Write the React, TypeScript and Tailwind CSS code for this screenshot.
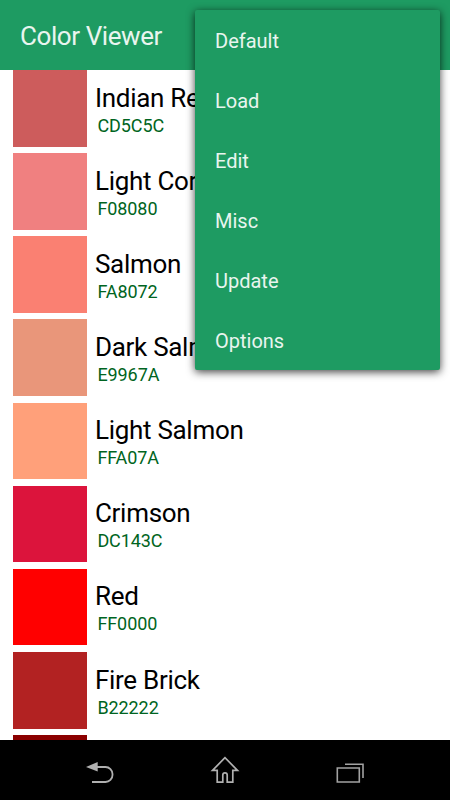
type Swatch = {
  name: string;
  hex: string;
};

const COLORS: Swatch[] = [
  { name: 'Indian Red', hex: 'CD5C5C' },
  { name: 'Light Coral', hex: 'F08080' },
  { name: 'Salmon', hex: 'FA8072' },
  { name: 'Dark Salmon', hex: 'E9967A' },
  { name: 'Light Salmon', hex: 'FFA07A' },
  { name: 'Crimson', hex: 'DC143C' },
  { name: 'Red', hex: 'FF0000' },
  { name: 'Fire Brick', hex: 'B22222' },
];

const MENU = ['Default', 'Load', 'Edit', 'Misc', 'Update', 'Options'];

function ColorRow({ name, hex }: Swatch) {
  return (
    <li className="flex h-[83.15px] shrink-0 items-start pl-[12.6px]">
      <div className="h-[76.6px] w-[74.8px] shrink-0" style={{ backgroundColor: `#${hex}` }} />
      <div className="flex flex-col pt-[11.6px] pl-[7.6px] whitespace-nowrap">
        <span className="text-[26px] leading-[32px] tracking-[-0.3px] text-black">{name}</span>
        <span className="pl-[2.4px] text-[18px] leading-[24.8px] tracking-[-0.08px] text-[#006421]">{hex}</span>
      </div>
    </li>
  );
}

function OverflowMenu() {
  return (
    <ul className="absolute top-[10px] right-[10px] w-[245px] rounded-[2px] bg-[#1e9b62] shadow-[0_2px_8px_rgba(0,0,0,0.75)]">
      {MENU.map((label) => (
        <li key={label} className="flex h-[60px] items-center pt-[2px] pl-5 text-[20px] text-[#e9f5ef]">
          {label}
        </li>
      ))}
    </ul>
  );
}

function NavBar() {
  return (
    <nav className="flex h-[60px] shrink-0 items-center justify-between bg-black px-[70px]">
      <svg width="60" height="60" viewBox="0 0 60 60" fill="none" stroke="#b0b0b0" strokeWidth="1.8">
        <path d="M26 27h9.5a7 7 0 0 1 7 7v1a7 7 0 0 1-7 7H22" />
        <path d="M16 27 27.7 22v9.5z" fill="#b0b0b0" stroke="none" />
      </svg>
      <svg width="60" height="60" viewBox="0 0 60 60" fill="none" stroke="#b0b0b0" strokeWidth="1.7">
        <path d="M30 17.7 17.5 30.4h4.7V42.2h5.6V35a2.2 2.2 0 0 1 4.4 0v7.2h5.6V30.4h4.7z" />
      </svg>
      <svg width="60" height="60" viewBox="0 0 60 60" fill="none" stroke="#a2a2a2" strokeWidth="1.6">
        <path d="M17.3 28h22v14h-22zM25 24.3h18V38" />
      </svg>
    </nav>
  );
}

export default function App() {
  return (
    <div className="relative flex h-[800px] w-[450px] flex-col overflow-hidden bg-white font-[Roboto,sans-serif]">
      <header className="flex h-[70px] shrink-0 items-center bg-[#1e9b62] pt-[3px] pl-5">
        <h1 className="text-[26px] leading-[31px] tracking-[-0.42px] text-[#e9f5ef]">Color Viewer</h1>
      </header>
      <ul className="flex min-h-0 flex-1 flex-col overflow-hidden">
        {COLORS.map((color) => (
          <ColorRow key={color.hex} {...color} />
        ))}
        {/* top edge of the next row, Dark Red */}
        <li className="h-[6px] shrink-0 pl-[12.6px]">
          <div className="h-full w-[74.8px] bg-[#8b0000]" />
        </li>
      </ul>
      <NavBar />
      <OverflowMenu />
    </div>
  );
}
